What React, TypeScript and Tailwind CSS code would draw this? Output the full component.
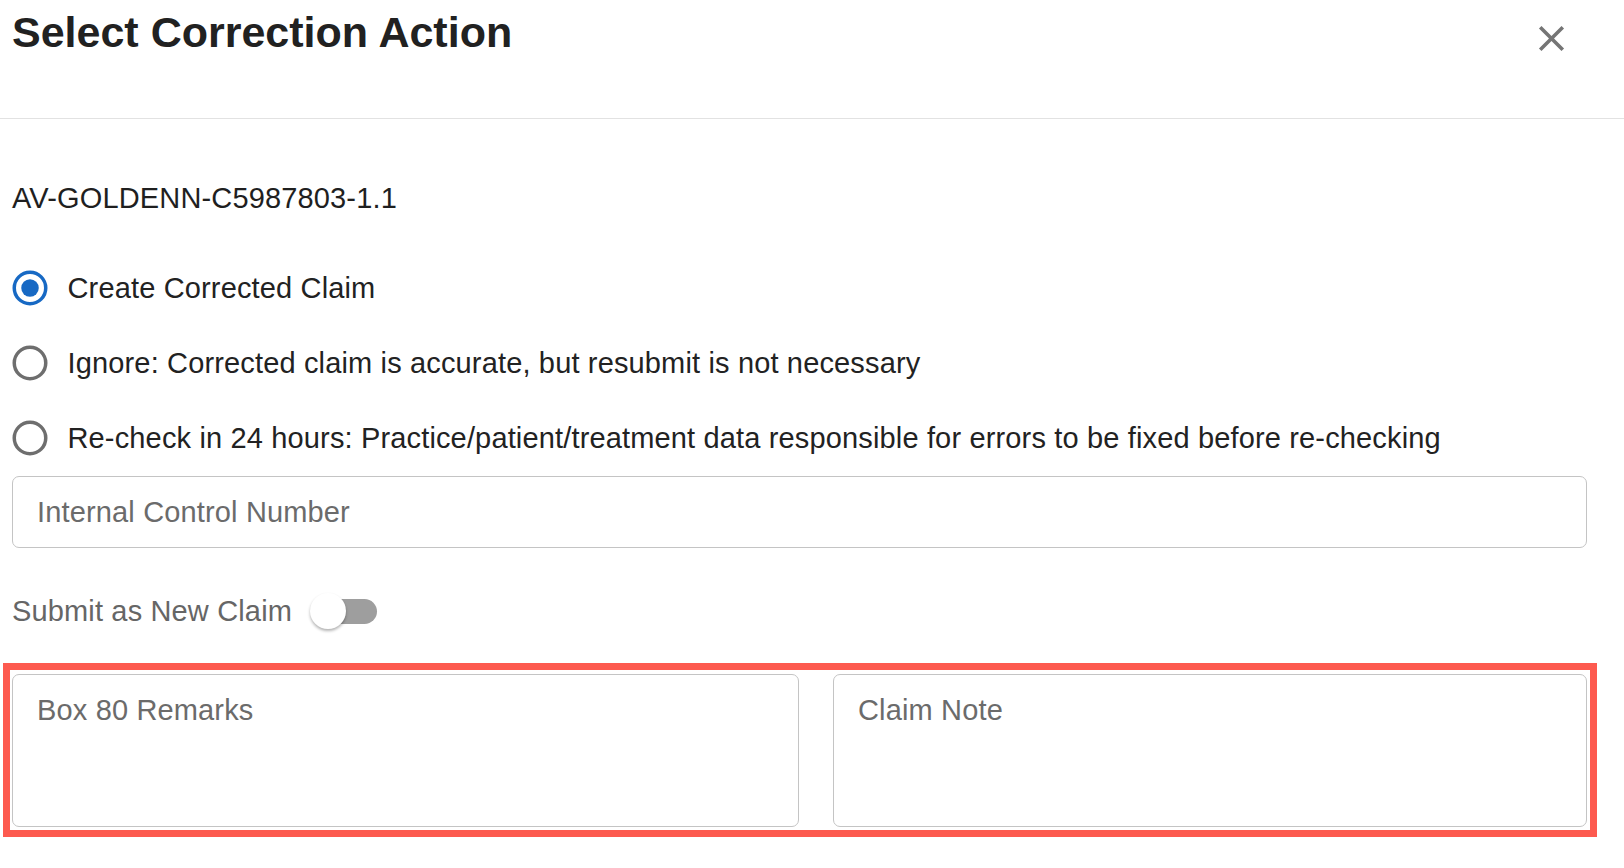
import { useState } from 'react'

const OPTIONS = [
  { id: 'corrected', label: 'Create Corrected Claim' },
  { id: 'ignore', label: 'Ignore: Corrected claim is accurate, but resubmit is not necessary' },
  {
    id: 'recheck',
    label:
      'Re-check in 24 hours: Practice/patient/treatment data responsible for errors to be fixed before re-checking',
  },
]

function RadioIcon({ checked }: { checked: boolean }) {
  return (
    <svg className="w-[42px] h-[42px] shrink-0" viewBox="0 0 24 24">
      <circle cx="12" cy="12" r="9" fill="none" stroke={checked ? '#1769c4' : '#6e6e6e'} strokeWidth={2} />
      {checked && <circle cx="12" cy="12" r="5" fill="#1769c4" />}
    </svg>
  )
}

export default function App() {
  const [action, setAction] = useState('corrected')
  const [asNew, setAsNew] = useState(false)

  return (
    <div className="w-[1624px] h-[868px] bg-white overflow-hidden font-['Liberation_Sans',Arial,sans-serif]">
      {/* header */}
      <div className="h-[119px] border-b border-[#e2e2e2] relative">
        <h1 className="pl-[12px] pt-[8px] text-[43px] leading-[48px] font-bold text-[#212121]">
          Select Correction Action
        </h1>
        <button aria-label="Close" className="absolute left-[1530px] top-[17px] w-[43px] h-[43px]">
          <svg viewBox="0 0 24 24" className="w-[43px] h-[43px]" fill="#757575">
            <path d="M19 6.41 17.59 5 12 10.59 6.41 5 5 6.41 10.59 12 5 17.59 6.41 19 12 13.41 17.59 19 19 17.59 13.41 12z" />
          </svg>
        </button>
      </div>

      <div className="ml-[12px] w-[1575px] text-[29px] tracking-[0.15px]">
        <div className="mt-[63px] leading-[32px] text-[#1f1f1f]">AV-GOLDENN-C5987803-1.1</div>

        <div className="mt-[36px] flex flex-col">
          {OPTIONS.map((o) => (
            <label
              key={o.id}
              className="h-[75px] flex items-center cursor-pointer -ml-[3.5px]"
              onClick={() => setAction(o.id)}
            >
              <RadioIcon checked={action === o.id} />
              <span className="ml-[17px] leading-[32px] text-[#222] whitespace-nowrap">{o.label}</span>
            </label>
          ))}
        </div>

        <input
          placeholder="Internal Control Number"
          className="mt-[1px] block w-full h-[72px] border border-[#c4c4c4] rounded-[7px] px-[24px] text-[#222] placeholder:text-[#6b6b6b] outline-none"
        />

        <div className="mt-[27px] h-[72px] flex items-center">
          <span className="leading-[32px] text-[#666]">Submit as New Claim</span>
          <button
            aria-label="Submit as New Claim"
            className="relative ml-[18px] w-[67px] h-[36px]"
            onClick={() => setAsNew(!asNew)}
          >
            <span className="absolute left-[6px] top-[5.5px] w-[61px] h-[25px] rounded-full bg-[#9e9e9e]" />
            <span
              className={`absolute top-0 w-[36px] h-[36px] rounded-full bg-white shadow-[0_2px_3px_rgba(0,0,0,0.3)] ${
                asNew ? 'left-[31px]' : 'left-0'
              }`}
            />
          </button>
        </div>

        <div className="mt-[16px] -ml-[9px] w-[1594px] border-[7px] border-[#fd5a4f] pl-[2px] pt-[4px] pr-[3px] pb-[3px] flex gap-[34px]">
          <textarea
            placeholder="Box 80 Remarks"
            className="w-[787px] h-[153px] shrink-0 border border-[#c4c4c4] rounded-[7px] pl-[24px] pt-[19px] leading-[32px] text-[#222] placeholder:text-[#6b6b6b] outline-none resize-none"
          />
          <textarea
            placeholder="Claim Note"
            className="w-[754px] h-[153px] shrink-0 border border-[#c4c4c4] rounded-[7px] pl-[24px] pt-[19px] leading-[32px] text-[#222] placeholder:text-[#6b6b6b] outline-none resize-none"
          />
        </div>
      </div>
    </div>
  )
}
